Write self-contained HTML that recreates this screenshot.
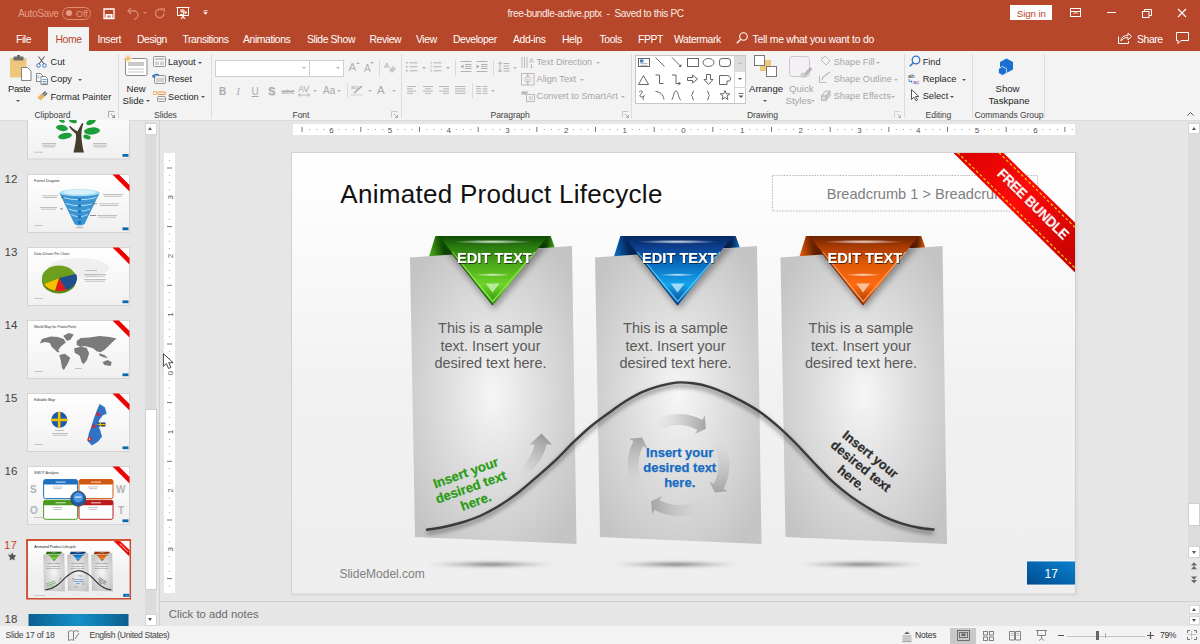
<!DOCTYPE html>
<html><head><meta charset="utf-8">
<style>
*{box-sizing:border-box;margin:0;padding:0}
html,body{width:1200px;height:644px;overflow:hidden;background:#e6e6e6;font-family:"Liberation Sans",sans-serif;position:relative}
.a{position:absolute}
.t{position:absolute;white-space:nowrap;line-height:1}
svg{position:absolute;overflow:visible}
#titlebar{left:0;top:0;width:1200px;height:51px;background:#b7472a}
#ribbon{left:0;top:51px;width:1200px;height:70px;background:#f3f3f3;border-bottom:1px solid #dadada}
.tab{position:absolute;top:34px;font-size:10.4px;color:#fff;letter-spacing:-0.4px}
.tb{position:absolute;top:8px;font-size:10.4px;color:#fff}
.rt{position:absolute;font-size:9.2px;color:#262626;white-space:nowrap;line-height:1}
.dis{color:#a6a6a6}
.gl{position:absolute;top:110.8px;font-size:8.6px;letter-spacing:-0.1px;color:#444;white-space:nowrap;line-height:1}
.sep{position:absolute;top:54px;width:1px;height:64px;background:#dcdcdc}
.dd{position:absolute;width:0;height:0;border-left:2.5px solid transparent;border-right:2.5px solid transparent;border-top:2.5px solid #555}
.dd.g{border-top-color:#b4b4b4}
.thumb{position:absolute;left:27.5px;width:102px;height:58px;background:#fff;border:1px solid #cfcfcf;overflow:hidden}
.tn{position:absolute;left:4px;font-size:12.5px;color:#444;line-height:1}
.rn{position:absolute;font-size:8px;color:#555;line-height:1}
</style></head><body>
<!-- TITLE BAR -->
<div id="titlebar" class="a"></div>
<div class="tb" style="left:18px;color:#e59b85;font-size:10.2px;top:8px;letter-spacing:-0.45px">AutoSave</div>
<div class="a" style="left:61.5px;top:6.5px;width:29.5px;height:13px;border:1px solid #e08d74;border-radius:7px"></div>
<div class="a" style="left:66px;top:10px;width:6px;height:6px;border-radius:3px;background:#e59b85"></div>
<div class="tb" style="left:76px;top:9px;font-size:9px;color:#e59b85">Off</div>
<!-- save -->
<svg style="left:103px;top:8px" width="12" height="11" viewBox="0 0 12 11"><path d="M1 1h10v9.5H1z" fill="none" stroke="#fff" stroke-width="1.3"/><rect x="2.5" y="6" width="7" height="4.5" fill="#fff"/><rect x="4.5" y="7.5" width="1.2" height="2" fill="#b7472a"/><rect x="6.3" y="7.5" width="1.2" height="2" fill="#b7472a"/></svg>
<!-- undo -->
<svg style="left:126px;top:7px" width="14" height="12" viewBox="0 0 14 12"><path d="M2 4h6a4 4 0 0 1 0 8" fill="none" stroke="#dd8a72" stroke-width="1.3"/><path d="M5 1L2 4l3 3" fill="none" stroke="#dd8a72" stroke-width="1.3"/></svg>
<div class="dd" style="left:143px;top:12px;border-top-color:#dd8a72"></div>
<svg style="left:154px;top:8px" width="12" height="11" viewBox="0 0 12 11"><path d="M8.5 2.2A4.3 4.3 0 1 0 10 5.5" fill="none" stroke="#dd8a72" stroke-width="1.3"/><path d="M6.5 0.8h3.8v3.5" fill="none" stroke="#dd8a72" stroke-width="1.2"/></svg>
<!-- slideshow from start icon -->
<svg style="left:176px;top:6px" width="15" height="14" viewBox="0 0 15 14"><path d="M0.5 1.5h13M1.5 1.5v8h11v-8M7 9.5v3M5 13l2-3 2 3" fill="none" stroke="#fff" stroke-width="1"/><path d="M4 4h4v1H5v1h2.5v2.5H4" fill="none" stroke="#fff" stroke-width="0.9"/><path d="M8.5 4.5l3 2-3 2z" fill="#fff"/></svg>
<svg style="left:203px;top:10px" width="5" height="5" viewBox="0 0 5 5"><path d="M0.5 0.8h4" stroke="#fff" stroke-width="0.9"/><path d="M0.3 2.3h4.4L2.5 4.8z" fill="#fff"/></svg>
<div class="tb" style="left:507.5px;top:8.3px;font-size:10px;color:#fcebe6;letter-spacing:-0.33px">free-bundle-active.pptx&nbsp; -&nbsp; Saved to this PC</div>
<div class="a" style="left:1009.5px;top:5px;width:42px;height:15px;background:#fff"></div>
<div class="tb" style="left:1016.8px;top:8px;font-size:9.8px;color:#b7472a;letter-spacing:-0.15px">Sign in</div>
<svg style="left:1070px;top:8px" width="11" height="9" viewBox="0 0 11 9"><rect x="0.5" y="0.5" width="10" height="8" fill="none" stroke="#fff" stroke-width="1"/><path d="M0.5 3.5h10" stroke="#fff"/><path d="M3.5 6l2-2 2 2" fill="none" stroke="#fff" stroke-width="1"/></svg>
<div class="a" style="left:1106.5px;top:12px;width:9px;height:1px;background:#fff"></div>
<svg style="left:1142px;top:8.5px" width="10" height="9" viewBox="0 0 10 9"><rect x="0.5" y="2.5" width="6.5" height="6" fill="none" stroke="#fff" stroke-width="1"/><path d="M2.5 2.5V0.5h7v6H7" fill="none" stroke="#fff" stroke-width="1"/></svg>
<svg style="left:1178px;top:8.5px" width="8" height="8" viewBox="0 0 8 8"><path d="M0 0L8 8M8 0L0 8" stroke="#fff" stroke-width="1.1"/></svg>
<!-- TABS -->
<div class="a" style="left:48px;top:27px;width:41px;height:25px;background:#f3f3f3"></div>
<div class="tab" style="left:16px">File</div>
<div class="tab" style="left:55.5px;color:#b7472a">Home</div>
<div class="tab" style="left:97.5px">Insert</div>
<div class="tab" style="left:137px">Design</div>
<div class="tab" style="left:182.5px">Transitions</div>
<div class="tab" style="left:243px">Animations</div>
<div class="tab" style="left:307px">Slide Show</div>
<div class="tab" style="left:369.5px">Review</div>
<div class="tab" style="left:416px">View</div>
<div class="tab" style="left:453px">Developer</div>
<div class="tab" style="left:513px">Add-ins</div>
<div class="tab" style="left:562px">Help</div>
<div class="tab" style="left:599.5px">Tools</div>
<div class="tab" style="left:638px">FPPT</div>
<div class="tab" style="left:674px">Watermark</div>
<svg style="left:736px;top:32px" width="12" height="12" viewBox="0 0 12 12"><circle cx="7.5" cy="4.5" r="3.8" fill="none" stroke="#fff" stroke-width="1.1"/><path d="M4.8 7.2L0.8 11.2" stroke="#fff" stroke-width="1.3"/></svg>
<div class="tab" style="left:752.5px;letter-spacing:-0.25px">Tell me what you want to do</div>
<svg style="left:1118px;top:32px" width="14" height="12" viewBox="0 0 14 12"><path d="M0.5 4.5v7h10V9" fill="none" stroke="#fff" stroke-width="1"/><path d="M3 9c0-4 3-5.5 7-5.5V1l3.5 3.5L10 8V5.5C7 5.5 4.5 6.5 3 9z" fill="none" stroke="#fff" stroke-width="1"/></svg>
<div class="tab" style="left:1137px">Share</div>
<svg style="left:1176px;top:32px" width="13" height="12" viewBox="0 0 13 12"><path d="M0.5 0.5h12v8H5l-3 3v-3H0.5z" fill="none" stroke="#fff" stroke-width="1"/></svg>
<!-- RIBBON -->
<div id="ribbon" class="a"></div>
<!-- Clipboard -->
<svg style="left:9px;top:55px" width="23" height="26" viewBox="0 0 23 26"><rect x="1" y="3" width="16.5" height="19.5" rx="1" fill="#edc77b"/><rect x="4.5" y="1.5" width="10" height="4" rx="0.8" fill="#6d6d6d"/><rect x="8" y="0" width="3" height="2" fill="#6d6d6d"/><path d="M12.5 12.5h6l3.5 3.5v9.5h-9.5z" fill="#fff" stroke="#777" stroke-width="0.9"/></svg>
<div class="rt" style="left:8px;top:83.5px;font-size:9.4px;letter-spacing:-0.3px">Paste</div>
<div class="dd" style="left:16px;top:99.5px"></div>
<svg style="left:36px;top:56px" width="11" height="12" viewBox="0 0 11 12"><path d="M2.5 0.5L8 8M8.5 0.5L3 8" stroke="#444" stroke-width="1"/><circle cx="2.5" cy="9.5" r="1.8" fill="none" stroke="#3d7ec4" stroke-width="1"/><circle cx="8.5" cy="9.5" r="1.8" fill="none" stroke="#3d7ec4" stroke-width="1"/></svg>
<div class="rt" style="left:50.5px;top:58px">Cut</div>
<svg style="left:36px;top:73px" width="12" height="12" viewBox="0 0 12 12"><path d="M0.5 0.5h4l2 2v6h-6z" fill="#fff" stroke="#777" stroke-width="0.9"/><path d="M5 3.5h4.5l2 2v6H5z" fill="#fff" stroke="#777" stroke-width="0.9"/><path d="M6.5 6.5h4M6.5 8.5h4M6.5 10.3h4" stroke="#3d7ec4" stroke-width="0.8"/><path d="M1.5 3h2M1.5 5h2" stroke="#3d7ec4" stroke-width="0.7"/></svg>
<div class="rt" style="left:50.5px;top:75px">Copy</div>
<div class="dd" style="left:78px;top:78.5px"></div>
<svg style="left:37px;top:91px" width="11" height="10" viewBox="0 0 11 10"><path d="M0.5 6.5l4-4 3 3-4 4z" fill="#e8b55e"/><path d="M5.5 3.5l3-3M7 5l3-3" stroke="#555" stroke-width="1.4"/></svg>
<div class="rt" style="left:50.5px;top:92.5px">Format Painter</div>
<div class="gl" style="left:34.5px">Clipboard</div>
<svg style="left:108px;top:111px" width="7" height="7" viewBox="0 0 7 7"><path d="M0.5 6.5v-6h6" fill="none" stroke="#999" stroke-width="0.8"/><path d="M3 3l3.5 3.5M6.5 4v2.5H4" fill="none" stroke="#777" stroke-width="0.8"/></svg>
<div class="sep" style="left:117.5px"></div>
<!-- Slides -->
<svg style="left:123px;top:54px" width="25" height="23" viewBox="0 0 25 23"><rect x="2.5" y="4.5" width="21.5" height="17" rx="1.5" fill="#fff" stroke="#8a8a8a" stroke-width="1"/><rect x="5" y="8" width="16" height="4" fill="#c8c8c8"/><path d="M5 15h16M5 18h16" stroke="#b8b8b8" stroke-width="0.8"/><circle cx="5" cy="4.5" r="2" fill="#f3c36d"/><path d="M5 0v9M0.5 4.5h9M1.8 1.3l6.4 6.4M8.2 1.3L1.8 7.7" stroke="#f3c36d" stroke-width="0.8"/></svg>
<div class="rt" style="left:126.5px;top:83.5px;font-size:9.6px">New</div>
<div class="rt" style="left:122.5px;top:95.5px;font-size:9.6px">Slide</div>
<div class="dd" style="left:146px;top:99.5px"></div>
<svg style="left:153px;top:56px" width="13" height="11" viewBox="0 0 13 11"><rect x="0.5" y="0.5" width="12" height="10" rx="1" fill="#f6f6f6" stroke="#8a8a8a" stroke-width="0.9"/><rect x="2" y="2" width="9" height="2" fill="#c8c8c8"/><rect x="2" y="5.5" width="4" height="3.5" fill="#d0d0d0"/><rect x="7" y="5.5" width="4" height="3.5" fill="#d0d0d0"/></svg>
<div class="rt" style="left:168px;top:58px">Layout</div>
<div class="dd" style="left:197.5px;top:62px"></div>
<svg style="left:152px;top:73px" width="14" height="11" viewBox="0 0 14 11"><rect x="2.5" y="2.5" width="11" height="8" rx="1" fill="#eee" stroke="#8a8a8a" stroke-width="0.9"/><rect x="4" y="5" width="8" height="4" fill="#d0d0d0"/><path d="M1 4A3.5 3.5 0 0 1 7 2.5" fill="none" stroke="#2f73c2" stroke-width="1.3"/><path d="M0 2l1 3 3-1z" fill="#2f73c2"/></svg>
<div class="rt" style="left:168px;top:75px">Reset</div>
<svg style="left:153px;top:91px" width="13" height="11" viewBox="0 0 13 11"><rect x="0.5" y="0.5" width="3" height="3" fill="none" stroke="#f0b060" stroke-width="0.8"/><rect x="4.5" y="1" width="8" height="2.5" rx="1" fill="#f4f4f4" stroke="#e8833a" stroke-width="0.9"/><rect x="4.5" y="5.5" width="8" height="5" rx="1" fill="#f4f4f4" stroke="#8a8a8a" stroke-width="0.9"/><path d="M4.5 8h8" stroke="#8a8a8a" stroke-width="0.8"/></svg>
<div class="rt" style="left:168px;top:92.5px">Section</div>
<div class="dd" style="left:201px;top:96px"></div>
<div class="gl" style="left:154px">Slides</div>
<div class="sep" style="left:211px"></div>
<!-- Font -->
<div class="a" style="left:214.5px;top:59.5px;width:95px;height:17px;background:#fff;border:1px solid #cfcfcf"></div>
<div class="a" style="left:308.5px;top:59.5px;width:35px;height:17px;background:#fff;border:1px solid #cfcfcf"></div>
<div class="dd g" style="left:302px;top:67px"></div>
<div class="dd g" style="left:336px;top:67px"></div>
<div class="rt dis" style="left:348.5px;top:62px;font-size:11.5px;color:#b0b0b0">A</div>
<div class="a" style="left:356px;top:62px;width:0;height:0;border-left:2px solid transparent;border-right:2px solid transparent;border-bottom:2px solid #b0b0b0"></div>
<div class="rt dis" style="left:364px;top:64px;font-size:10px;color:#b0b0b0">A</div>
<div class="a" style="left:370px;top:62px;width:0;height:0;border-left:2px solid transparent;border-right:2px solid transparent;border-top:2px solid #b0b0b0"></div>
<div class="a" style="left:378.5px;top:60px;width:1px;height:17px;background:#dadada"></div>
<svg style="left:384px;top:61px" width="13" height="13" viewBox="0 0 13 13"><text x="0" y="7" font-size="8" fill="#b0b0b0" font-family="Liberation Sans">A</text><path d="M5 9l4-4 3 3-4 4z" fill="#c8c8c8"/></svg>
<div class="rt" style="left:219px;top:86.5px;font-size:10px;font-weight:bold;color:#aaa">B</div>
<div class="rt" style="left:236.5px;top:86.5px;font-size:10px;font-style:italic;color:#aaa;font-family:'Liberation Serif'">I</div>
<div class="rt" style="left:251.5px;top:86.5px;font-size:10px;color:#aaa;text-decoration:underline">U</div>
<div class="rt" style="left:268px;top:85.5px;font-size:11px;font-weight:bold;color:#aaa;text-shadow:1px 1px 0 #ddd">S</div>
<div class="rt" style="left:281.5px;top:88px;font-size:8px;color:#aaa;text-decoration:line-through">abc</div>
<div class="rt" style="left:298px;top:84.5px;font-size:9px;color:#aaa">AV</div>
<svg style="left:298px;top:93px" width="12" height="4" viewBox="0 0 12 4"><path d="M0.5 2h11M2.5 0.5L0.5 2l2 1.5M9.5 0.5l2 1.5-2 1.5" fill="none" stroke="#aaa" stroke-width="0.8"/></svg>
<div class="dd g" style="left:313px;top:90px"></div>
<div class="rt" style="left:323px;top:86px;font-size:10px;color:#aaa">Aa</div>
<div class="dd g" style="left:336.5px;top:90px"></div>
<div class="a" style="left:346.5px;top:83px;width:1px;height:15px;background:#dadada"></div>
<svg style="left:351px;top:84px" width="13" height="12" viewBox="0 0 13 12"><text x="0" y="5" font-size="6" fill="#aaa" font-family="Liberation Sans">aty</text><path d="M3 9l8-7" stroke="#aaa" stroke-width="1.6"/><rect x="0" y="10" width="12" height="1.6" fill="#e6d9e6"/></svg>
<div class="dd g" style="left:367.5px;top:90px"></div>
<div class="rt" style="left:377px;top:84.5px;font-size:11.5px;color:#aaa">A</div>
<div class="dd g" style="left:391.5px;top:90px"></div>
<div class="gl" style="left:292.5px">Font</div>
<svg style="left:391px;top:111px" width="7" height="7" viewBox="0 0 7 7"><path d="M0.5 6.5v-6h6" fill="none" stroke="#bbb" stroke-width="0.8"/><path d="M3 3l3.5 3.5M6.5 4v2.5H4" fill="none" stroke="#999" stroke-width="0.8"/></svg>
<div class="sep" style="left:400.5px"></div>
<!-- Paragraph -->
<svg style="left:406px;top:61px" width="12" height="12" viewBox="0 0 12 12"><g fill="#aaa"><rect x="0" y="1" width="1.5" height="1.5"/><rect x="0" y="5" width="1.5" height="1.5"/><rect x="0" y="9" width="1.5" height="1.5"/></g><path d="M3.5 1.8h8M3.5 5.8h8M3.5 9.8h8" stroke="#aaa" stroke-width="0.9"/></svg>
<div class="dd g" style="left:421.5px;top:67px"></div>
<svg style="left:430px;top:61px" width="12" height="12" viewBox="0 0 12 12"><g fill="#aaa" font-size="3.5" font-family="Liberation Sans"><text x="0" y="3">1</text><text x="0" y="7">2</text><text x="0" y="11">3</text></g><path d="M3.5 1.8h8M3.5 5.8h8M3.5 9.8h8" stroke="#aaa" stroke-width="0.9"/></svg>
<div class="dd g" style="left:445.5px;top:67px"></div>
<div class="a" style="left:455px;top:60px;width:1px;height:16px;background:#dadada"></div>
<svg style="left:460px;top:61px" width="12" height="11" viewBox="0 0 12 11"><path d="M0.5 0.5h11M5 3.5h6.5M5 5.5h6.5M5 7.5h6.5M0.5 10.5h11" stroke="#aaa" stroke-width="0.9"/><path d="M3.5 3.5L0.5 5.5l3 2z" fill="#aaa"/></svg>
<svg style="left:476px;top:61px" width="12" height="11" viewBox="0 0 12 11"><path d="M0.5 0.5h11M5 3.5h6.5M5 5.5h6.5M5 7.5h6.5M0.5 10.5h11" stroke="#aaa" stroke-width="0.9"/><path d="M0.5 3.5L3.5 5.5l-3 2z" fill="#aaa"/></svg>
<div class="a" style="left:493px;top:60px;width:1px;height:16px;background:#dadada"></div>
<svg style="left:498px;top:61px" width="12" height="12" viewBox="0 0 12 12"><path d="M2 1v10M0 3l2-2.2L4 3M0 9l2 2.2L4 9" fill="none" stroke="#aaa" stroke-width="0.9"/><path d="M5.5 2.5h6M5.5 5h6M5.5 7.5h6M5.5 10h6" stroke="#aaa" stroke-width="0.9"/></svg>
<div class="dd g" style="left:513px;top:67px"></div>
<svg style="left:521px;top:56px" width="14" height="13" viewBox="0 0 14 13"><path d="M1 1v11M3.5 1v11M6 1v11" stroke="#b4b4b4" stroke-width="0.9"/><text x="8" y="7" font-size="7" fill="#b4b4b4" font-family="Liberation Sans">A</text><path d="M10.5 8v4M9.3 10.8l1.2 1.2 1.2-1.2" fill="none" stroke="#b4b4b4" stroke-width="0.8"/></svg>
<div class="rt dis" style="left:536.5px;top:57.5px">Text Direction</div>
<div class="dd g" style="left:596px;top:61.5px"></div>
<svg style="left:521px;top:73px" width="14" height="13" viewBox="0 0 14 13"><rect x="0.5" y="0.5" width="12.5" height="11.5" fill="none" stroke="#b4b4b4" stroke-width="0.9"/><rect x="3" y="3.5" width="7.5" height="5.5" fill="#e6d9e6"/><path d="M6.8 0v4M5.5 2.5l1.3 1.5 1.3-1.5M6.8 12.5v-4M5.5 10l1.3-1.5 1.3 1.5" fill="none" stroke="#aaa" stroke-width="0.8"/></svg>
<div class="rt dis" style="left:536.5px;top:74.5px">Align Text</div>
<div class="dd g" style="left:580px;top:78.5px"></div>
<svg style="left:521px;top:91px" width="14" height="11" viewBox="0 0 14 11"><path d="M0.5 0.5h7l-2.5 3h-4.5z" fill="#b4b4b4"/><rect x="5.5" y="3.5" width="8" height="7" fill="#f3f3f3" stroke="#b4b4b4" stroke-width="0.9"/><path d="M7.5 6h4.5M7.5 8h4.5" stroke="#b4b4b4" stroke-width="0.8"/></svg>
<div class="rt dis" style="left:536.5px;top:92px">Convert to SmartArt</div>
<div class="dd g" style="left:621px;top:96px"></div>
<svg style="left:407px;top:86px" width="10" height="9" viewBox="0 0 10 9"><path d="M0 0.5h9M0 2.8h6M0 5.1h9M0 7.4h6" stroke="#b0b0b0" stroke-width="0.9"/></svg>
<svg style="left:423px;top:86px" width="10" height="9" viewBox="0 0 10 9"><path d="M0 0.5h10M2 2.8h6M0 5.1h10M2 7.4h6" stroke="#b0b0b0" stroke-width="0.9"/></svg>
<svg style="left:439px;top:86px" width="10" height="9" viewBox="0 0 10 9"><path d="M0 0.5h10M4 2.8h6M0 5.1h10M4 7.4h6" stroke="#b0b0b0" stroke-width="0.9"/></svg>
<svg style="left:455px;top:86px" width="11" height="9" viewBox="0 0 11 9"><path d="M0 0.5h10.5M0 2.8h10.5M0 5.1h10.5M0 7.4h10.5" stroke="#b0b0b0" stroke-width="0.9"/></svg>
<div class="a" style="left:471.5px;top:83px;width:1px;height:15px;background:#dadada"></div>
<svg style="left:476px;top:86px" width="12" height="9" viewBox="0 0 12 9"><path d="M0 0.5h5M0 2.8h5M0 5.1h5M0 7.4h5M6.5 0.5h5M6.5 2.8h5M6.5 5.1h5M6.5 7.4h5" stroke="#b0b0b0" stroke-width="0.9"/></svg>
<div class="dd g" style="left:490.5px;top:90px"></div>
<div class="gl" style="left:490.5px">Paragraph</div>
<svg style="left:622px;top:111px" width="7" height="7" viewBox="0 0 7 7"><path d="M0.5 6.5v-6h6" fill="none" stroke="#bbb" stroke-width="0.8"/><path d="M3 3l3.5 3.5M6.5 4v2.5H4" fill="none" stroke="#999" stroke-width="0.8"/></svg>
<div class="sep" style="left:631px"></div>
<!-- Drawing -->
<div class="a" style="left:635px;top:54.5px;width:111px;height:49px;background:#fff;border:1px solid #c6c6c6"></div>
<div class="a" style="left:734.5px;top:55.5px;width:10.5px;height:16px;background:#dcdcdc"></div>
<div class="a" style="left:734px;top:55px;width:1px;height:48px;background:#d6d6d6"></div>
<div class="a" style="left:734.5px;top:86.5px;width:11px;height:1px;background:#d6d6d6"></div>
<div class="a" style="left:738px;top:62px;width:0;height:0;border-left:2px solid transparent;border-right:2px solid transparent;border-bottom:2px solid #bbb"></div>
<div class="dd" style="left:737.5px;top:78px"></div>
<svg style="left:737.5px;top:93px" width="6" height="6" viewBox="0 0 6 6"><path d="M0.5 0.5h5" stroke="#555" stroke-width="0.8"/><path d="M0.5 2.5h5L3 5z" fill="#555"/></svg>
<svg style="left:636px;top:55px" width="98" height="48" viewBox="636 55 98 48">
<g fill="none" stroke="#555" stroke-width="0.9">
<rect x="638.5" y="58.5" width="11" height="8" fill="#fff"/><path d="M640.5 63.5h7M640.5 65.3h7" stroke="#999" stroke-width="0.7"/>
<path d="M655.5 57.5l9 9"/>
<path d="M672 57.5l8.5 8.5"/><path d="M679 66.5h2v-2" stroke-width="1"/>
<rect x="687.5" y="58.5" width="11" height="8"/>
<ellipse cx="708.5" cy="62.5" rx="5.5" ry="4"/>
<rect x="719.5" y="58.5" width="11" height="8" rx="2.5"/>
<path d="M638.5 84.5l5-9 5 9z"/>
<path d="M655.5 75h4v8.5h4"/>
<path d="M672 75h4v8.5h4"/><path d="M678.5 82l2 1.5-2 1.5"/>
<path d="M687.5 77.5h5v-2.5l5 4-5 4v-2.5h-5z"/>
<path d="M706.5 74.5h4v5h2.5l-4.5 5-4.5-5h2.5z"/>
<path d="M719.5 84.5v-9h7c2 0 4 1 4 3.5 0 2-1 2-2.5 2h-1v3.5z"/>
<path d="M639 92c2-2 5-1 2 2s1 4 3 2-3 3 0 4"/>
<path d="M655.5 91.5c4 0 8 3 8.5 8"/>
<path d="M671.5 100c2-1 2-9 4.5-9s2.5 9 5 9"/>
<path d="M694 91c-2 0-1 4-2.5 4.5 1.5.5.5 4.5 2.5 4.5"/>
<path d="M707 91c2 0 1 4 2.5 4.5-1.5.5-.5 4.5-2.5 4.5"/>
<path d="M725 90.5l1.3 3.3h3.5l-2.8 2.2 1 3.5-3-2-3 2 1-3.5-2.8-2.2h3.5z"/>
</g>
<path d="M640 59.5h3.5v3h-3.5z" fill="#3d7ec4"/>
</svg>
<svg style="left:754px;top:55px" width="24" height="23" viewBox="0 0 24 23"><rect x="6" y="5" width="11" height="11" fill="#edc77b"/><rect x="0.5" y="0.5" width="10" height="10" fill="#fff" stroke="#6a6a6a" stroke-width="0.9"/><rect x="12.5" y="11.5" width="10" height="10" fill="#fff" stroke="#6a6a6a" stroke-width="0.9"/></svg>
<div class="rt" style="left:749px;top:83.5px;font-size:9.6px">Arrange</div>
<div class="dd" style="left:763px;top:99.5px"></div>
<svg style="left:789px;top:56px" width="24" height="24" viewBox="0 0 24 24"><rect x="0.5" y="0.5" width="20" height="20" rx="3" fill="#f5f0f5" stroke="#c8c8c8" stroke-width="1"/><path d="M13 20l8-9 2.5 2-8 9z" fill="#b4b4b4"/><circle cx="14" cy="19" r="2.5" fill="#ccc"/></svg>
<div class="rt dis" style="left:789px;top:83.5px;font-size:9.6px">Quick</div>
<div class="rt dis" style="left:785.5px;top:95.5px;font-size:9.6px">Styles</div>
<div class="dd g" style="left:811px;top:99.5px"></div>
<div class="gl" style="left:747px">Drawing</div>
<svg style="left:820px;top:55px" width="12" height="11" viewBox="0 0 12 11"><path d="M1 5l4-4 5 5-4 4z" fill="none" stroke="#b4b4b4" stroke-width="0.9"/><path d="M2.5 3.5L1 2" stroke="#b4b4b4"/></svg>
<div class="rt dis" style="left:833.7px;top:57.5px">Shape Fill</div>
<div class="dd g" style="left:876px;top:61.5px"></div>
<svg style="left:819px;top:72px" width="12" height="11" viewBox="0 0 12 11"><path d="M0.5 3.5v7h7" fill="none" stroke="#b4b4b4" stroke-width="0.9"/><path d="M3 8l1-3 7-5" fill="none" stroke="#b4b4b4" stroke-width="1.1"/></svg>
<div class="rt dis" style="left:833.7px;top:74.5px">Shape Outline</div>
<div class="dd g" style="left:893.5px;top:78.5px"></div>
<svg style="left:819.5px;top:89.5px" width="11" height="11" viewBox="0 0 11 11"><path d="M1.5 6l4-5h4.5l-4 5z" fill="#eee" stroke="#b4b4b4" stroke-width="0.9"/><path d="M1.5 6h4.5v4.5H1.5z" fill="#ddd" stroke="#b4b4b4" stroke-width="0.9"/><path d="M6 6l4-5v4.5l-4 5z" fill="#ccc" stroke="#b4b4b4" stroke-width="0.9"/></svg>
<div class="rt dis" style="left:833.7px;top:91.5px">Shape Effects</div>
<div class="dd g" style="left:891px;top:95.5px"></div>
<svg style="left:894px;top:111px" width="7" height="7" viewBox="0 0 7 7"><path d="M0.5 6.5v-6h6" fill="none" stroke="#ccc" stroke-width="0.8"/><path d="M3 3l3.5 3.5M6.5 4v2.5H4" fill="none" stroke="#aaa" stroke-width="0.8"/></svg>
<div class="sep" style="left:903.5px"></div>
<!-- Editing -->
<svg style="left:909px;top:55px" width="12" height="12" viewBox="0 0 12 12"><circle cx="7" cy="5" r="3.8" fill="none" stroke="#2f73c2" stroke-width="1.3"/><path d="M4.3 7.7L0.8 11.2" stroke="#2f73c2" stroke-width="1.6"/></svg>
<div class="rt" style="left:922.7px;top:57.5px">Find</div>
<svg style="left:908px;top:72px" width="13" height="13" viewBox="0 0 13 13"><text x="0" y="5.5" font-size="6" fill="#333" font-family="Liberation Sans">ab</text><text x="5" y="11.5" font-size="6" fill="#7b4fb5" font-family="Liberation Sans">ac</text><path d="M1 7v2.5h3M3 8.5l1.2 1-1.2 1" fill="none" stroke="#2f73c2" stroke-width="0.8"/></svg>
<div class="rt" style="left:922.7px;top:74.5px">Replace</div>
<div class="dd" style="left:962px;top:78.5px"></div>
<svg style="left:911px;top:89px" width="8" height="12" viewBox="0 0 8 12"><path d="M0.5 0.5v10l2.5-2.3 2 3.5 1.5-.8-2-3.4h3.3z" fill="#fff" stroke="#444" stroke-width="0.9"/></svg>
<div class="rt" style="left:922.7px;top:91.5px">Select</div>
<div class="dd" style="left:950px;top:95.5px"></div>
<div class="gl" style="left:925.6px">Editing</div>
<div class="sep" style="left:971.5px"></div>
<!-- Commands -->
<svg style="left:998px;top:58px" width="17" height="17" viewBox="0 0 17 17"><path d="M8.5 0.5l6.5 3.5v7.5l-6.5 3.5-6.5-3.5V4z" fill="#1a6fd1"/><path d="M4.5 8.5l4 2.2v4.5l-4 2.2-4-2.2v-4.5z" fill="#1a6fd1" stroke="#f3f3f3" stroke-width="0.8"/></svg>
<div class="rt" style="left:995.5px;top:84px;font-size:9.6px">Show</div>
<div class="rt" style="left:988.5px;top:96px;font-size:9.6px">Taskpane</div>
<div class="gl" style="left:974.5px">Commands Group</div>
<div class="sep" style="left:1043.5px"></div>
<svg style="left:1187px;top:112px" width="7" height="4" viewBox="0 0 7 4"><path d="M0.5 3.5l3-3 3 3" fill="none" stroke="#444" stroke-width="0.9"/></svg>

<!-- PANE -->
<div class="a" style="left:145px;top:122px;width:11px;height:503px;background:#dcdcdc"></div>
<div class="a" style="left:144.5px;top:122.5px;width:12px;height:12px;background:#fff;border:1px solid #d4d4d4"></div>
<div class="a" style="left:148px;top:127px;width:0;height:0;border-left:2.5px solid transparent;border-right:2.5px solid transparent;border-bottom:3px solid #555"></div>
<div class="a" style="left:144.5px;top:408.5px;width:12px;height:181px;background:#fff;border:1px solid #cfcfcf"></div>
<div class="a" style="left:144.5px;top:613.5px;width:12px;height:12px;background:#fff;border:1px solid #d4d4d4"></div>
<div class="a" style="left:148px;top:618px;width:0;height:0;border-left:2.5px solid transparent;border-right:2.5px solid transparent;border-top:3px solid #555"></div>
<div class="a" style="left:159px;top:120px;width:1px;height:506px;background:#d2d2d2"></div>
<div class="a" style="left:164px;top:153px;width:11px;height:440px;background:#fff"></div>
<div class="a" style="left:293px;top:124px;width:782px;height:11px;background:#fff"></div>
<svg style="left:0;top:0" width="1200" height="644" viewBox="0 0 1200 644"><rect x="301.6" y="127" width="1" height="5" fill="#777"/><rect x="309.0" y="129" width="1" height="1" fill="#999"/><rect x="316.3" y="129" width="1" height="1" fill="#999"/><rect x="323.6" y="129" width="1" height="1" fill="#999"/><text x="331.5" y="132.8" font-size="8" fill="#555" text-anchor="middle" font-family="Liberation Sans">6</text><rect x="338.3" y="129" width="1" height="1" fill="#999"/><rect x="345.6" y="129" width="1" height="1" fill="#999"/><rect x="353.0" y="129" width="1" height="1" fill="#999"/><rect x="360.3" y="127" width="1" height="5" fill="#777"/><rect x="367.6" y="129" width="1" height="1" fill="#999"/><rect x="375.0" y="129" width="1" height="1" fill="#999"/><rect x="382.3" y="129" width="1" height="1" fill="#999"/><text x="390.1" y="132.8" font-size="8" fill="#555" text-anchor="middle" font-family="Liberation Sans">5</text><rect x="397.0" y="129" width="1" height="1" fill="#999"/><rect x="404.3" y="129" width="1" height="1" fill="#999"/><rect x="411.7" y="129" width="1" height="1" fill="#999"/><rect x="419.0" y="127" width="1" height="5" fill="#777"/><rect x="426.3" y="129" width="1" height="1" fill="#999"/><rect x="433.7" y="129" width="1" height="1" fill="#999"/><rect x="441.0" y="129" width="1" height="1" fill="#999"/><text x="448.8" y="132.8" font-size="8" fill="#555" text-anchor="middle" font-family="Liberation Sans">4</text><rect x="455.7" y="129" width="1" height="1" fill="#999"/><rect x="463.0" y="129" width="1" height="1" fill="#999"/><rect x="470.3" y="129" width="1" height="1" fill="#999"/><rect x="477.7" y="127" width="1" height="5" fill="#777"/><rect x="485.0" y="129" width="1" height="1" fill="#999"/><rect x="492.3" y="129" width="1" height="1" fill="#999"/><rect x="499.7" y="129" width="1" height="1" fill="#999"/><text x="507.5" y="132.8" font-size="8" fill="#555" text-anchor="middle" font-family="Liberation Sans">3</text><rect x="514.3" y="129" width="1" height="1" fill="#999"/><rect x="521.7" y="129" width="1" height="1" fill="#999"/><rect x="529.0" y="129" width="1" height="1" fill="#999"/><rect x="536.3" y="127" width="1" height="5" fill="#777"/><rect x="543.7" y="129" width="1" height="1" fill="#999"/><rect x="551.0" y="129" width="1" height="1" fill="#999"/><rect x="558.3" y="129" width="1" height="1" fill="#999"/><text x="566.2" y="132.8" font-size="8" fill="#555" text-anchor="middle" font-family="Liberation Sans">2</text><rect x="573.0" y="129" width="1" height="1" fill="#999"/><rect x="580.3" y="129" width="1" height="1" fill="#999"/><rect x="587.7" y="129" width="1" height="1" fill="#999"/><rect x="595.0" y="127" width="1" height="5" fill="#777"/><rect x="602.3" y="129" width="1" height="1" fill="#999"/><rect x="609.7" y="129" width="1" height="1" fill="#999"/><rect x="617.0" y="129" width="1" height="1" fill="#999"/><text x="624.8" y="132.8" font-size="8" fill="#555" text-anchor="middle" font-family="Liberation Sans">1</text><rect x="631.7" y="129" width="1" height="1" fill="#999"/><rect x="639.0" y="129" width="1" height="1" fill="#999"/><rect x="646.3" y="129" width="1" height="1" fill="#999"/><rect x="653.7" y="127" width="1" height="5" fill="#777"/><rect x="661.0" y="129" width="1" height="1" fill="#999"/><rect x="668.3" y="129" width="1" height="1" fill="#999"/><rect x="675.7" y="129" width="1" height="1" fill="#999"/><text x="683.5" y="132.8" font-size="8" fill="#555" text-anchor="middle" font-family="Liberation Sans">0</text><rect x="690.3" y="129" width="1" height="1" fill="#999"/><rect x="697.7" y="129" width="1" height="1" fill="#999"/><rect x="705.0" y="129" width="1" height="1" fill="#999"/><rect x="712.3" y="127" width="1" height="5" fill="#777"/><rect x="719.7" y="129" width="1" height="1" fill="#999"/><rect x="727.0" y="129" width="1" height="1" fill="#999"/><rect x="734.3" y="129" width="1" height="1" fill="#999"/><text x="742.2" y="132.8" font-size="8" fill="#555" text-anchor="middle" font-family="Liberation Sans">1</text><rect x="749.0" y="129" width="1" height="1" fill="#999"/><rect x="756.3" y="129" width="1" height="1" fill="#999"/><rect x="763.7" y="129" width="1" height="1" fill="#999"/><rect x="771.0" y="127" width="1" height="5" fill="#777"/><rect x="778.3" y="129" width="1" height="1" fill="#999"/><rect x="785.7" y="129" width="1" height="1" fill="#999"/><rect x="793.0" y="129" width="1" height="1" fill="#999"/><text x="800.8" y="132.8" font-size="8" fill="#555" text-anchor="middle" font-family="Liberation Sans">2</text><rect x="807.7" y="129" width="1" height="1" fill="#999"/><rect x="815.0" y="129" width="1" height="1" fill="#999"/><rect x="822.3" y="129" width="1" height="1" fill="#999"/><rect x="829.7" y="127" width="1" height="5" fill="#777"/><rect x="837.0" y="129" width="1" height="1" fill="#999"/><rect x="844.3" y="129" width="1" height="1" fill="#999"/><rect x="851.7" y="129" width="1" height="1" fill="#999"/><text x="859.5" y="132.8" font-size="8" fill="#555" text-anchor="middle" font-family="Liberation Sans">3</text><rect x="866.3" y="129" width="1" height="1" fill="#999"/><rect x="873.7" y="129" width="1" height="1" fill="#999"/><rect x="881.0" y="129" width="1" height="1" fill="#999"/><rect x="888.3" y="127" width="1" height="5" fill="#777"/><rect x="895.7" y="129" width="1" height="1" fill="#999"/><rect x="903.0" y="129" width="1" height="1" fill="#999"/><rect x="910.3" y="129" width="1" height="1" fill="#999"/><text x="918.2" y="132.8" font-size="8" fill="#555" text-anchor="middle" font-family="Liberation Sans">4</text><rect x="925.0" y="129" width="1" height="1" fill="#999"/><rect x="932.3" y="129" width="1" height="1" fill="#999"/><rect x="939.7" y="129" width="1" height="1" fill="#999"/><rect x="947.0" y="127" width="1" height="5" fill="#777"/><rect x="954.3" y="129" width="1" height="1" fill="#999"/><rect x="961.7" y="129" width="1" height="1" fill="#999"/><rect x="969.0" y="129" width="1" height="1" fill="#999"/><text x="976.9" y="132.8" font-size="8" fill="#555" text-anchor="middle" font-family="Liberation Sans">5</text><rect x="983.7" y="129" width="1" height="1" fill="#999"/><rect x="991.0" y="129" width="1" height="1" fill="#999"/><rect x="998.4" y="129" width="1" height="1" fill="#999"/><rect x="1005.7" y="127" width="1" height="5" fill="#777"/><rect x="1013.0" y="129" width="1" height="1" fill="#999"/><rect x="1020.4" y="129" width="1" height="1" fill="#999"/><rect x="1027.7" y="129" width="1" height="1" fill="#999"/><text x="1035.5" y="132.8" font-size="8" fill="#555" text-anchor="middle" font-family="Liberation Sans">6</text><rect x="1042.4" y="129" width="1" height="1" fill="#999"/><rect x="1049.7" y="129" width="1" height="1" fill="#999"/><rect x="1057.0" y="129" width="1" height="1" fill="#999"/><rect x="1064.4" y="127" width="1" height="5" fill="#777"/><rect x="1071.7" y="129" width="1" height="1" fill="#999"/><rect x="169" y="160.1" width="1" height="1" fill="#999"/><rect x="167" y="167.5" width="5" height="1" fill="#777"/><rect x="169" y="174.8" width="1" height="1" fill="#999"/><rect x="169" y="182.1" width="1" height="1" fill="#999"/><rect x="169" y="189.5" width="1" height="1" fill="#999"/><text x="0" y="0" font-size="8" fill="#555" text-anchor="middle" font-family="Liberation Sans" transform="translate(172.8,197.3) rotate(-90)">3</text><rect x="169" y="204.1" width="1" height="1" fill="#999"/><rect x="169" y="211.5" width="1" height="1" fill="#999"/><rect x="169" y="218.8" width="1" height="1" fill="#999"/><rect x="167" y="226.1" width="5" height="1" fill="#777"/><rect x="169" y="233.5" width="1" height="1" fill="#999"/><rect x="169" y="240.8" width="1" height="1" fill="#999"/><rect x="169" y="248.1" width="1" height="1" fill="#999"/><text x="0" y="0" font-size="8" fill="#555" text-anchor="middle" font-family="Liberation Sans" transform="translate(172.8,256.0) rotate(-90)">2</text><rect x="169" y="262.8" width="1" height="1" fill="#999"/><rect x="169" y="270.1" width="1" height="1" fill="#999"/><rect x="169" y="277.5" width="1" height="1" fill="#999"/><rect x="167" y="284.8" width="5" height="1" fill="#777"/><rect x="169" y="292.1" width="1" height="1" fill="#999"/><rect x="169" y="299.5" width="1" height="1" fill="#999"/><rect x="169" y="306.8" width="1" height="1" fill="#999"/><text x="0" y="0" font-size="8" fill="#555" text-anchor="middle" font-family="Liberation Sans" transform="translate(172.8,314.6) rotate(-90)">1</text><rect x="169" y="321.5" width="1" height="1" fill="#999"/><rect x="169" y="328.8" width="1" height="1" fill="#999"/><rect x="169" y="336.1" width="1" height="1" fill="#999"/><rect x="167" y="343.5" width="5" height="1" fill="#777"/><rect x="169" y="350.8" width="1" height="1" fill="#999"/><rect x="169" y="358.1" width="1" height="1" fill="#999"/><rect x="169" y="365.5" width="1" height="1" fill="#999"/><text x="0" y="0" font-size="8" fill="#555" text-anchor="middle" font-family="Liberation Sans" transform="translate(172.8,373.3) rotate(-90)">0</text><rect x="169" y="380.1" width="1" height="1" fill="#999"/><rect x="169" y="387.5" width="1" height="1" fill="#999"/><rect x="169" y="394.8" width="1" height="1" fill="#999"/><rect x="167" y="402.1" width="5" height="1" fill="#777"/><rect x="169" y="409.5" width="1" height="1" fill="#999"/><rect x="169" y="416.8" width="1" height="1" fill="#999"/><rect x="169" y="424.1" width="1" height="1" fill="#999"/><text x="0" y="0" font-size="8" fill="#555" text-anchor="middle" font-family="Liberation Sans" transform="translate(172.8,432.0) rotate(-90)">1</text><rect x="169" y="438.8" width="1" height="1" fill="#999"/><rect x="169" y="446.1" width="1" height="1" fill="#999"/><rect x="169" y="453.5" width="1" height="1" fill="#999"/><rect x="167" y="460.8" width="5" height="1" fill="#777"/><rect x="169" y="468.1" width="1" height="1" fill="#999"/><rect x="169" y="475.5" width="1" height="1" fill="#999"/><rect x="169" y="482.8" width="1" height="1" fill="#999"/><text x="0" y="0" font-size="8" fill="#555" text-anchor="middle" font-family="Liberation Sans" transform="translate(172.8,490.6) rotate(-90)">2</text><rect x="169" y="497.5" width="1" height="1" fill="#999"/><rect x="169" y="504.8" width="1" height="1" fill="#999"/><rect x="169" y="512.1" width="1" height="1" fill="#999"/><rect x="167" y="519.5" width="5" height="1" fill="#777"/><rect x="169" y="526.8" width="1" height="1" fill="#999"/><rect x="169" y="534.1" width="1" height="1" fill="#999"/><rect x="169" y="541.5" width="1" height="1" fill="#999"/><text x="0" y="0" font-size="8" fill="#555" text-anchor="middle" font-family="Liberation Sans" transform="translate(172.8,549.3) rotate(-90)">3</text><rect x="169" y="556.1" width="1" height="1" fill="#999"/><rect x="169" y="563.5" width="1" height="1" fill="#999"/><rect x="169" y="570.8" width="1" height="1" fill="#999"/><rect x="167" y="578.1" width="5" height="1" fill="#777"/><rect x="169" y="585.5" width="1" height="1" fill="#999"/></svg>
<div class="a" style="left:1188px;top:122px;width:12px;height:436px;background:#dcdcdc"></div>
<div class="a" style="left:1188px;top:122.5px;width:11.5px;height:11px;background:#fff;border:1px solid #d4d4d4"></div>
<div class="a" style="left:1191.5px;top:126.5px;width:0;height:0;border-left:2.5px solid transparent;border-right:2.5px solid transparent;border-bottom:3px solid #555"></div>
<div class="a" style="left:1188px;top:503px;width:11.5px;height:22.5px;background:#fff;border:1px solid #cfcfcf"></div>
<div class="a" style="left:1188px;top:546px;width:11.5px;height:12px;background:#fff;border:1px solid #d4d4d4"></div>
<div class="a" style="left:1191.5px;top:550.5px;width:0;height:0;border-left:2.5px solid transparent;border-right:2.5px solid transparent;border-top:3px solid #555"></div>
<svg style="left:1190px;top:561px" width="8" height="22" viewBox="0 0 8 22"><path d="M1 4.6L4 1.3 7 4.6z M1 8.3L4 5 7 8.3z" fill="#666"/><path d="M1 15.4L4 18.7 7 15.4z M1 18.9L4 22.2 7 18.9z" fill="#666"/></svg>
<div class="a" style="left:160px;top:601px;width:1040px;height:1px;background:#cfcfcf"></div>
<div class="t" style="left:168.8px;top:608.5px;font-size:11.3px;color:#6a6a6a">Click to add notes</div>
<div class="a" style="left:1188.5px;top:605px;width:11px;height:9px;background:#fff;border:1px solid #d8d8d8"></div>
<div class="a" style="left:1191.5px;top:608px;width:0;height:0;border-left:2.5px solid transparent;border-right:2.5px solid transparent;border-bottom:3px solid #555"></div>
<div class="a" style="left:1188.5px;top:616px;width:11px;height:9px;background:#fff;border:1px solid #d8d8d8"></div>
<div class="a" style="left:1191.5px;top:619px;width:0;height:0;border-left:2.5px solid transparent;border-right:2.5px solid transparent;border-top:3px solid #555"></div>
<div class="a" style="left:0;top:626px;width:1200px;height:18px;background:#f3f3f3"></div>
<div class="t" style="left:5.5px;top:631px;font-size:8.6px;color:#444;letter-spacing:-0.25px">Slide 17 of 18</div>
<svg style="left:68px;top:630px" width="12" height="11" viewBox="0 0 12 11"><path d="M0.5 1.5c2-1 4-1 5 0v9c-1-1-3-1-5 0z M5.5 1.5c2-1 4-1 5.5 0" fill="none" stroke="#777" stroke-width="0.9"/><path d="M7 9l4-6" stroke="#777" stroke-width="0.9"/></svg>
<div class="t" style="left:89.5px;top:631px;font-size:8.6px;color:#444;letter-spacing:-0.35px">English (United States)</div>
<svg style="left:902px;top:630.5px" width="10" height="11" viewBox="0 0 10 11"><path d="M2 3l3-2.5L8 3z" fill="#666"/><path d="M0.5 5h9M0.5 7h9M0.5 9h9M0.5 10.6h9" stroke="#888" stroke-width="0.8"/></svg>
<div class="t" style="left:915px;top:631px;font-size:8.6px;color:#333;letter-spacing:-0.2px">Notes</div>
<div class="a" style="left:950px;top:627.5px;width:26px;height:16.5px;background:#c9c9c9"></div>
<svg style="left:956.5px;top:630px" width="13" height="11" viewBox="0 0 13 11"><rect x="0.5" y="0.5" width="12" height="10" fill="none" stroke="#666" stroke-width="0.9"/><rect x="2.5" y="2.5" width="8" height="5" fill="none" stroke="#666" stroke-width="0.9"/><rect x="4.5" y="3.5" width="4" height="2.5" fill="#666"/></svg>
<svg style="left:983px;top:630.5px" width="11" height="10" viewBox="0 0 11 10"><rect x="0.5" y="0.5" width="4" height="3.5" fill="none" stroke="#777" stroke-width="0.9"/><rect x="6.5" y="0.5" width="4" height="3.5" fill="none" stroke="#777" stroke-width="0.9"/><rect x="0.5" y="6" width="4" height="3.5" fill="none" stroke="#777" stroke-width="0.9"/><rect x="6.5" y="6" width="4" height="3.5" fill="none" stroke="#777" stroke-width="0.9"/></svg>
<svg style="left:1009px;top:630px" width="12" height="11" viewBox="0 0 12 11"><path d="M0.5 1.5h5v8.5h-5zM6.5 1.5h5v8.5h-5z" fill="none" stroke="#777" stroke-width="0.9"/><path d="M2 3.5h2.5M2 5.5h2.5M7.5 3.5h2.5M7.5 5.5h2.5" stroke="#999" stroke-width="0.7"/></svg>
<svg style="left:1036px;top:630px" width="11" height="11" viewBox="0 0 11 11"><path d="M0 0.5h11M1.5 0.5v5h8v-5M5.5 5.5v3M3 10.5l2.5-2 2.5 2" fill="none" stroke="#777" stroke-width="0.9"/></svg>
<div class="a" style="left:1058px;top:635px;width:6px;height:1.3px;background:#555"></div>
<div class="a" style="left:1067px;top:635.5px;width:77.5px;height:1px;background:#c3c3c3"></div>
<div class="a" style="left:1105px;top:633px;width:1px;height:5px;background:#aaa"></div>
<div class="a" style="left:1095.5px;top:631px;width:3px;height:9px;background:#666"></div>
<svg style="left:1147px;top:632px" width="7" height="7" viewBox="0 0 7 7"><path d="M3.5 0v7M0 3.5h7" stroke="#555" stroke-width="1.2"/></svg>
<div class="t" style="left:1160px;top:631px;font-size:8.6px;color:#333;letter-spacing:-0.4px">79%</div>
<svg style="left:1186.5px;top:630px" width="10" height="10" viewBox="0 0 10 10"><path d="M0.5 3V0.5H3M7 0.5h2.5V3M9.5 7v2.5H7M3 9.5H0.5V7" fill="none" stroke="#666" stroke-width="0.9"/><path d="M0.5 4.5h9M4.5 0.5v9" stroke="#999" stroke-width="0.5"/></svg>
<svg style="left:162px;top:352px" width="13" height="18" viewBox="0 0 13 18"><path d="M1.4 1.7v12.7l3-2.9 2.2 5 2.3-1-2.1-4.8h4.3z" fill="#fff" stroke="#333" stroke-width="0.9" stroke-linejoin="round"/></svg>
<!-- /PANE -->
<!-- SLIDE -->
<div class="a" style="left:292px;top:153px;width:786px;height:443px;background:#dcdcdc;filter:blur(1px)"></div><svg style="left:290px;top:150px" width="788" height="446" viewBox="290 150 788 446">
<defs>
<linearGradient id="bg" x1="0" y1="0" x2="0" y2="1"><stop offset="0" stop-color="#ffffff"/><stop offset="0.1" stop-color="#fdfdfd"/><stop offset="0.55" stop-color="#f1f1f1"/><stop offset="1" stop-color="#eeeeee"/></linearGradient>
<radialGradient id="panel" cx="0.5" cy="0.5" r="0.62"><stop offset="0" stop-color="#f6f6f6"/><stop offset="0.45" stop-color="#dedede"/><stop offset="1" stop-color="#c4c4c4"/></radialGradient>
<linearGradient id="rib" x1="0" y1="0" x2="1" y2="1"><stop offset="0" stop-color="#d80000"/><stop offset="0.45" stop-color="#ff0a0a"/><stop offset="1" stop-color="#c00000"/></linearGradient>
<linearGradient id="num" x1="0" y1="1" x2="1" y2="0"><stop offset="0" stop-color="#004a8c"/><stop offset="1" stop-color="#0a82d0"/></linearGradient>
<filter id="blur2" x="-50%" y="-50%" width="200%" height="200%"><feGaussianBlur stdDeviation="2"/></filter>
<filter id="blur3" x="-50%" y="-50%" width="200%" height="200%"><feGaussianBlur stdDeviation="3"/></filter>
<filter id="blur1" x="-50%" y="-50%" width="200%" height="200%"><feGaussianBlur stdDeviation="1.2"/></filter>
<filter id="blur4" x="-50%" y="-100%" width="200%" height="300%"><feGaussianBlur stdDeviation="5 1.5"/></filter>
<filter id="tsh" x="-20%" y="-50%" width="140%" height="200%" filterUnits="objectBoundingBox"><feDropShadow dx="0.6" dy="0.8" stdDeviation="0.6" flood-color="#000" flood-opacity="0.8"/></filter>
<radialGradient id="glow" cx="0.5" cy="0.5" r="0.5"><stop offset="0" stop-color="#fff" stop-opacity="0.85"/><stop offset="1" stop-color="#fff" stop-opacity="0"/></radialGradient>
<radialGradient id="shd" cx="0.5" cy="0.5" r="0.5"><stop offset="0" stop-color="#000" stop-opacity="0.6"/><stop offset="0.5" stop-color="#000" stop-opacity="0.2"/><stop offset="1" stop-color="#000" stop-opacity="0"/></radialGradient>

<linearGradient id="tri_g" x1="0" y1="0" x2="0" y2="1"><stop offset="0" stop-color="#0e4a04"/><stop offset="0.15" stop-color="#2a7a10"/><stop offset="0.4" stop-color="#4aa818"/><stop offset="0.7" stop-color="#6ed428"/><stop offset="1" stop-color="#2c8a0c"/></linearGradient>
<linearGradient id="flap_g" x1="0" y1="0" x2="0" y2="1"><stop offset="0" stop-color="#2a7a10"/><stop offset="1" stop-color="#0e4a04"/></linearGradient>
<linearGradient id="tri_b" x1="0" y1="0" x2="0" y2="1"><stop offset="0" stop-color="#06285e"/><stop offset="0.15" stop-color="#0c3c8a"/><stop offset="0.4" stop-color="#0a6cc0"/><stop offset="0.7" stop-color="#14a4ec"/><stop offset="1" stop-color="#083a8a"/></linearGradient>
<linearGradient id="flap_b" x1="0" y1="0" x2="0" y2="1"><stop offset="0" stop-color="#0c3c8a"/><stop offset="1" stop-color="#06285e"/></linearGradient>
<linearGradient id="tri_o" x1="0" y1="0" x2="0" y2="1"><stop offset="0" stop-color="#6a2200"/><stop offset="0.15" stop-color="#a83a04"/><stop offset="0.4" stop-color="#e05a08"/><stop offset="0.7" stop-color="#ff6c10"/><stop offset="1" stop-color="#9a3600"/></linearGradient>
<linearGradient id="flap_o" x1="0" y1="0" x2="0" y2="1"><stop offset="0" stop-color="#a83a04"/><stop offset="1" stop-color="#6a2200"/></linearGradient>
<linearGradient id="arr1" gradientUnits="userSpaceOnUse" x1="520" y1="472" x2="541" y2="434"><stop offset="0" stop-color="#b8b8b8" stop-opacity="0"/><stop offset="1" stop-color="#9a9a9a"/></linearGradient>
<filter id="tsh2" x="-30%" y="-60%" width="160%" height="220%"><feDropShadow dx="0" dy="0.5" stdDeviation="0.5" flood-color="#600" flood-opacity="0.6"/></filter></defs>
<g id="sc">
<rect x="291.5" y="152.5" width="784" height="441.5" fill="url(#bg)"/>
<text x="340.3" y="203.3" font-family="Liberation Sans" font-size="26" letter-spacing="0.28" fill="#111">Animated Product Lifecycle</text>
</g>
<rect x="772.5" y="175.5" width="265" height="35.5" fill="none" stroke="#a8a8a8" stroke-width="0.8" stroke-dasharray="1.6 1.2"/>
<text x="826.7" y="198.5" font-family="Liberation Sans" font-size="14.6" fill="#7f7f7f">Breadcrumb 1 &gt; Breadcrumb 2</text>
<g id="sc2">
<ellipse cx="491.0" cy="564.4" rx="64" ry="3.4" fill="url(#shd)" filter="url(#blur4)"/>
<linearGradient id="fl_g" gradientUnits="userSpaceOnUse" x1="429.0" y1="250" x2="443.0" y2="247"><stop offset="0" stop-color="#4aa818"/><stop offset="1" stop-color="#0e4a04"/></linearGradient>
<linearGradient id="fr_g" gradientUnits="userSpaceOnUse" x1="541.0" y1="242" x2="555.0" y2="244"><stop offset="0" stop-color="#0e4a04"/><stop offset="0.4" stop-color="#0e4a04"/><stop offset="1" stop-color="#4aa818"/></linearGradient>
<polygon points="435.4,236.0 440.0,236.0 456.0,258.0 428.5,258.0" fill="url(#fl_g)"/>
<polygon points="546.0,236.0 550.7,236.0 555.0,248.0 537.0,248.0" fill="url(#fr_g)"/>
<polygon points="410.0,257.5 572.0,246.0 576.5,544.0 415.0,537.0" fill="url(#panel)"/>
<polygon points="445.0,250.0 549.0,244.0 494.0,309.0" fill="#000" opacity="0.35" filter="url(#blur3)"/>
<polygon points="438.2,236.0 547.9,236.0 492.7,305.6" fill="url(#tri_g)"/>
<polyline points="452.0,252.0 492.7,301.5 535.0,252.0" fill="none" stroke="#90ec50" stroke-width="1.3" opacity="0.9"/>
<polyline points="440.0,238.0 492.7,305.0" fill="none" stroke="#0e4a04" stroke-width="1.2" opacity="0.8"/>
<ellipse cx="492.7" cy="241.8" rx="40" ry="2" fill="url(#glow)"/>
<ellipse cx="492.7" cy="274.8" rx="18" ry="1.6" fill="url(#glow)"/>
<polygon points="485.7,283.5 499.5,283.5 492.6,292.5" fill="#c8f0b0" opacity="0.85"/>
<text x="494.4" y="263.2" font-family="Liberation Sans" font-weight="bold" font-size="14.6" fill="#fff" text-anchor="middle" filter="url(#tsh)">EDIT TEXT</text>
<text x="490.5" y="333.1" font-family="Liberation Sans" font-size="14.5" fill="#5a5a5a" text-anchor="middle">This is a sample</text>
<text x="490.5" y="350.7" font-family="Liberation Sans" font-size="14.5" fill="#5a5a5a" text-anchor="middle">text. Insert your</text>
<text x="490.5" y="368.3" font-family="Liberation Sans" font-size="14.5" fill="#5a5a5a" text-anchor="middle">desired text here.</text>
<ellipse cx="676.0" cy="564.4" rx="64" ry="3.4" fill="url(#shd)" filter="url(#blur4)"/>
<linearGradient id="fl_b" gradientUnits="userSpaceOnUse" x1="614.0" y1="250" x2="628.0" y2="247"><stop offset="0" stop-color="#0a6cc0"/><stop offset="1" stop-color="#06285e"/></linearGradient>
<linearGradient id="fr_b" gradientUnits="userSpaceOnUse" x1="726.0" y1="242" x2="740.0" y2="244"><stop offset="0" stop-color="#06285e"/><stop offset="0.4" stop-color="#06285e"/><stop offset="1" stop-color="#0a6cc0"/></linearGradient>
<polygon points="620.4,236.0 625.0,236.0 641.0,258.0 613.5,258.0" fill="url(#fl_b)"/>
<polygon points="731.0,236.0 735.7,236.0 740.0,248.0 722.0,248.0" fill="url(#fr_b)"/>
<polygon points="595.0,257.5 757.0,246.0 761.5,544.0 600.0,537.0" fill="url(#panel)"/>
<polygon points="630.0,250.0 734.0,244.0 679.0,309.0" fill="#000" opacity="0.35" filter="url(#blur3)"/>
<polygon points="623.2,236.0 732.9,236.0 677.7,305.6" fill="url(#tri_b)"/>
<polyline points="637.0,252.0 677.7,301.5 720.0,252.0" fill="none" stroke="#5ccaf6" stroke-width="1.3" opacity="0.9"/>
<polyline points="625.0,238.0 677.7,305.0" fill="none" stroke="#06285e" stroke-width="1.2" opacity="0.8"/>
<ellipse cx="677.7" cy="241.8" rx="40" ry="2" fill="url(#glow)"/>
<ellipse cx="677.7" cy="274.8" rx="18" ry="1.6" fill="url(#glow)"/>
<polygon points="670.7,283.5 684.5,283.5 677.6,292.5" fill="#b8e4fa" opacity="0.85"/>
<text x="679.4" y="263.2" font-family="Liberation Sans" font-weight="bold" font-size="14.6" fill="#fff" text-anchor="middle" filter="url(#tsh)">EDIT TEXT</text>
<text x="675.5" y="333.1" font-family="Liberation Sans" font-size="14.5" fill="#5a5a5a" text-anchor="middle">This is a sample</text>
<text x="675.5" y="350.7" font-family="Liberation Sans" font-size="14.5" fill="#5a5a5a" text-anchor="middle">text. Insert your</text>
<text x="675.5" y="368.3" font-family="Liberation Sans" font-size="14.5" fill="#5a5a5a" text-anchor="middle">desired text here.</text>
<ellipse cx="861.5" cy="564.4" rx="64" ry="3.4" fill="url(#shd)" filter="url(#blur4)"/>
<linearGradient id="fl_o" gradientUnits="userSpaceOnUse" x1="799.5" y1="250" x2="813.5" y2="247"><stop offset="0" stop-color="#e05a08"/><stop offset="1" stop-color="#6a2200"/></linearGradient>
<linearGradient id="fr_o" gradientUnits="userSpaceOnUse" x1="911.5" y1="242" x2="925.5" y2="244"><stop offset="0" stop-color="#6a2200"/><stop offset="0.4" stop-color="#6a2200"/><stop offset="1" stop-color="#e05a08"/></linearGradient>
<polygon points="805.9,236.0 810.5,236.0 826.5,258.0 799.0,258.0" fill="url(#fl_o)"/>
<polygon points="916.5,236.0 921.2,236.0 925.5,248.0 907.5,248.0" fill="url(#fr_o)"/>
<polygon points="780.5,257.5 942.5,246.0 947.0,544.0 785.5,537.0" fill="url(#panel)"/>
<polygon points="815.5,250.0 919.5,244.0 864.5,309.0" fill="#000" opacity="0.35" filter="url(#blur3)"/>
<polygon points="808.7,236.0 918.4,236.0 863.2,305.6" fill="url(#tri_o)"/>
<polyline points="822.5,252.0 863.2,301.5 905.5,252.0" fill="none" stroke="#ffa060" stroke-width="1.3" opacity="0.9"/>
<polyline points="810.5,238.0 863.2,305.0" fill="none" stroke="#6a2200" stroke-width="1.2" opacity="0.8"/>
<ellipse cx="863.2" cy="241.8" rx="40" ry="2" fill="url(#glow)"/>
<ellipse cx="863.2" cy="274.8" rx="18" ry="1.6" fill="url(#glow)"/>
<polygon points="856.2,283.5 870.0,283.5 863.1,292.5" fill="#fcd0b0" opacity="0.85"/>
<text x="864.9" y="263.2" font-family="Liberation Sans" font-weight="bold" font-size="14.6" fill="#fff" text-anchor="middle" filter="url(#tsh)">EDIT TEXT</text>
<text x="861.0" y="333.1" font-family="Liberation Sans" font-size="14.5" fill="#5a5a5a" text-anchor="middle">This is a sample</text>
<text x="861.0" y="350.7" font-family="Liberation Sans" font-size="14.5" fill="#5a5a5a" text-anchor="middle">text. Insert your</text>
<text x="861.0" y="368.3" font-family="Liberation Sans" font-size="14.5" fill="#5a5a5a" text-anchor="middle">desired text here.</text>
<path d="M516,474 C527,464 533,453 534.5,444.5 L529.5,444.5 L541.5,433.5 L552,444.5 L546.5,444.5 C544,457 535,470 521,479 Z" fill="url(#arr1)"/>
<linearGradient id="ca0" gradientUnits="userSpaceOnUse" x1="655.1" y1="426.0" x2="705.9" y2="428.7"><stop offset="0" stop-color="#c8c8c8" stop-opacity="0"/><stop offset="1" stop-color="#a4a4a4"/></linearGradient>
<path d="M652.2,421.3 A51.0,51.0 0 0 1 702.4,420.0 L704.8,415.6 L705.9,428.7 L694.9,434.1 L697.3,429.7 A40.0,40.0 0 0 0 657.9,430.7 Z" fill="url(#ca0)"/>
<linearGradient id="ca1" gradientUnits="userSpaceOnUse" x1="717.5" y1="441.6" x2="714.8" y2="492.4"><stop offset="0" stop-color="#c8c8c8" stop-opacity="0"/><stop offset="1" stop-color="#a4a4a4"/></linearGradient>
<path d="M722.2,438.7 A51.0,51.0 0 0 1 723.5,488.9 L727.9,491.3 L714.8,492.4 L709.4,481.4 L713.8,483.8 A40.0,40.0 0 0 0 712.8,444.4 Z" fill="url(#ca1)"/>
<linearGradient id="ca2" gradientUnits="userSpaceOnUse" x1="701.9" y1="504.0" x2="651.1" y2="501.3"><stop offset="0" stop-color="#c8c8c8" stop-opacity="0"/><stop offset="1" stop-color="#a4a4a4"/></linearGradient>
<path d="M704.8,508.7 A51.0,51.0 0 0 1 654.6,510.0 L652.2,514.4 L651.1,501.3 L662.1,495.9 L659.7,500.3 A40.0,40.0 0 0 0 699.1,499.3 Z" fill="url(#ca2)"/>
<linearGradient id="ca3" gradientUnits="userSpaceOnUse" x1="639.5" y1="488.4" x2="642.2" y2="437.6"><stop offset="0" stop-color="#c8c8c8" stop-opacity="0"/><stop offset="1" stop-color="#a4a4a4"/></linearGradient>
<path d="M634.8,491.3 A51.0,51.0 0 0 1 633.5,441.1 L629.1,438.7 L642.2,437.6 L647.6,448.6 L643.2,446.2 A40.0,40.0 0 0 0 644.2,485.6 Z" fill="url(#ca3)"/>
<path d="M427.0,529.8 C429.2,529.4 434.5,528.8 440.0,527.7 C445.5,526.6 453.3,525.0 460.0,523.0 C466.7,521.0 473.3,519.0 480.0,516.0 C486.7,513.0 493.3,509.3 500.0,505.2 C506.7,501.1 513.3,496.4 520.0,491.2 C526.7,486.0 533.8,479.5 540.0,474.1 C546.2,468.7 551.3,464.2 557.0,458.8 C562.7,453.4 568.3,447.1 574.0,441.7 C579.7,436.3 585.3,431.0 591.0,426.3 C596.7,421.6 602.3,417.6 608.0,413.5 C613.7,409.4 619.3,405.2 625.0,401.6 C630.7,398.1 636.3,394.8 642.0,392.2 C647.7,389.6 653.3,387.8 659.0,386.2 C664.7,384.6 670.3,383.1 676.0,382.6 C681.7,382.1 687.3,382.6 693.0,383.3 C698.7,384.1 704.3,385.3 710.0,387.1 C715.7,388.9 721.3,391.3 727.0,393.9 C732.7,396.4 738.3,399.3 744.0,402.4 C749.7,405.5 755.3,408.7 761.0,412.7 C766.7,416.7 772.3,421.3 778.0,426.3 C783.7,431.3 788.5,435.9 795.0,442.5 C801.5,449.1 810.5,459.2 817.0,465.9 C823.5,472.6 828.3,477.8 834.0,482.9 C839.7,488.0 845.3,492.5 851.0,496.6 C856.7,500.7 862.3,504.3 868.0,507.7 C873.7,511.1 879.3,514.5 885.0,517.1 C890.7,519.8 896.3,521.8 902.0,523.6 C907.7,525.4 913.8,526.7 919.0,527.7 C924.2,528.7 931.1,529.2 933.5,529.5" fill="none" stroke="#000" stroke-opacity="0.35" stroke-width="4" transform="translate(0,3)" filter="url(#blur2)"/>
<path d="M427.0,529.8 C429.2,529.4 434.5,528.8 440.0,527.7 C445.5,526.6 453.3,525.0 460.0,523.0 C466.7,521.0 473.3,519.0 480.0,516.0 C486.7,513.0 493.3,509.3 500.0,505.2 C506.7,501.1 513.3,496.4 520.0,491.2 C526.7,486.0 533.8,479.5 540.0,474.1 C546.2,468.7 551.3,464.2 557.0,458.8 C562.7,453.4 568.3,447.1 574.0,441.7 C579.7,436.3 585.3,431.0 591.0,426.3 C596.7,421.6 602.3,417.6 608.0,413.5 C613.7,409.4 619.3,405.2 625.0,401.6 C630.7,398.1 636.3,394.8 642.0,392.2 C647.7,389.6 653.3,387.8 659.0,386.2 C664.7,384.6 670.3,383.1 676.0,382.6 C681.7,382.1 687.3,382.6 693.0,383.3 C698.7,384.1 704.3,385.3 710.0,387.1 C715.7,388.9 721.3,391.3 727.0,393.9 C732.7,396.4 738.3,399.3 744.0,402.4 C749.7,405.5 755.3,408.7 761.0,412.7 C766.7,416.7 772.3,421.3 778.0,426.3 C783.7,431.3 788.5,435.9 795.0,442.5 C801.5,449.1 810.5,459.2 817.0,465.9 C823.5,472.6 828.3,477.8 834.0,482.9 C839.7,488.0 845.3,492.5 851.0,496.6 C856.7,500.7 862.3,504.3 868.0,507.7 C873.7,511.1 879.3,514.5 885.0,517.1 C890.7,519.8 896.3,521.8 902.0,523.6 C907.7,525.4 913.8,526.7 919.0,527.7 C924.2,528.7 931.1,529.2 933.5,529.5" fill="none" stroke="#3a3a3a" stroke-width="2.4" stroke-linecap="round"/>
<defs><path id="crv" d="M427.0,529.8 C429.2,529.4 434.5,528.8 440.0,527.7 C445.5,526.6 453.3,525.0 460.0,523.0 C466.7,521.0 473.3,519.0 480.0,516.0 C486.7,513.0 493.3,509.3 500.0,505.2 C506.7,501.1 513.3,496.4 520.0,491.2 C526.7,486.0 533.8,479.5 540.0,474.1 C546.2,468.7 551.3,464.2 557.0,458.8 C562.7,453.4 568.3,447.1 574.0,441.7 C579.7,436.3 585.3,431.0 591.0,426.3 C596.7,421.6 602.3,417.6 608.0,413.5 C613.7,409.4 619.3,405.2 625.0,401.6 C630.7,398.1 636.3,394.8 642.0,392.2 C647.7,389.6 653.3,387.8 659.0,386.2 C664.7,384.6 670.3,383.1 676.0,382.6 C681.7,382.1 687.3,382.6 693.0,383.3 C698.7,384.1 704.3,385.3 710.0,387.1 C715.7,388.9 721.3,391.3 727.0,393.9 C732.7,396.4 738.3,399.3 744.0,402.4 C749.7,405.5 755.3,408.7 761.0,412.7 C766.7,416.7 772.3,421.3 778.0,426.3 C783.7,431.3 788.5,435.9 795.0,442.5 C801.5,449.1 810.5,459.2 817.0,465.9 C823.5,472.6 828.3,477.8 834.0,482.9 C839.7,488.0 845.3,492.5 851.0,496.6 C856.7,500.7 862.3,504.3 868.0,507.7 C873.7,511.1 879.3,514.5 885.0,517.1 C890.7,519.8 896.3,521.8 902.0,523.6 C907.7,525.4 913.8,526.7 919.0,527.7 C924.2,528.7 931.1,529.2 933.5,529.5"/></defs>
<g transform="translate(470.8,487.0) rotate(-19.5)"><text x="0" y="-10.6" font-family="Liberation Sans" font-weight="bold" font-size="13.2" fill="#2a9c14" stroke="#2a9c14" stroke-width="0.25" text-anchor="middle">Insert your</text><text x="0" y="4.6" font-family="Liberation Sans" font-weight="bold" font-size="13.2" fill="#2a9c14" stroke="#2a9c14" stroke-width="0.25" text-anchor="middle">desired text</text><text x="0" y="19.8" font-family="Liberation Sans" font-weight="bold" font-size="13.2" fill="#2a9c14" stroke="#2a9c14" stroke-width="0.25" text-anchor="middle">here.</text></g>
<g transform="translate(679.7,467.5) rotate(0.0)"><text x="0" y="-10.6" font-family="Liberation Sans" font-weight="bold" font-size="13.0" fill="#166bc2" stroke="#166bc2" stroke-width="0.25" text-anchor="middle">Insert your</text><text x="0" y="4.6" font-family="Liberation Sans" font-weight="bold" font-size="13.0" fill="#166bc2" stroke="#166bc2" stroke-width="0.25" text-anchor="middle">desired text</text><text x="0" y="19.8" font-family="Liberation Sans" font-weight="bold" font-size="13.0" fill="#166bc2" stroke="#166bc2" stroke-width="0.25" text-anchor="middle">here.</text></g>
<g transform="translate(861.0,466.0) rotate(39.0)"><text x="0" y="-10.6" font-family="Liberation Sans" font-weight="bold" font-size="13.0" fill="#2e2e2e" stroke="#2e2e2e" stroke-width="0.25" text-anchor="middle">Insert your</text><text x="0" y="4.6" font-family="Liberation Sans" font-weight="bold" font-size="13.0" fill="#2e2e2e" stroke="#2e2e2e" stroke-width="0.25" text-anchor="middle">desired text</text><text x="0" y="19.8" font-family="Liberation Sans" font-weight="bold" font-size="13.0" fill="#2e2e2e" stroke="#2e2e2e" stroke-width="0.25" text-anchor="middle">here.</text></g>
<text x="339.4" y="578" font-family="Liberation Sans" font-size="12" fill="#808080">SlideModel.com</text>
<rect x="1026.5" y="561" width="49" height="24" fill="url(#num)" stroke="#fff" stroke-width="0.8"/>
<text x="1051.2" y="577.6" font-family="Liberation Sans" font-size="12" fill="#fff" text-anchor="middle">17</text>
<polygon points="953,152.5 1003,152.5 1075.5,223 1075.5,273" fill="url(#rib)"/>
<polyline points="957.5,152.5 1075.5,268.5" fill="none" stroke="#ffe000" stroke-width="1.1" stroke-dasharray="3 2.2"/>
<polyline points="998.8,152.5 1075.5,227.8" fill="none" stroke="#ffe000" stroke-width="1.1" stroke-dasharray="3 2.2"/>
<text x="0" y="0" font-family="Liberation Sans" font-weight="bold" font-size="13.8" letter-spacing="-0.4" fill="#fff" text-anchor="middle" transform="translate(1029.5,207.5) rotate(44.5)" filter="url(#tsh2)">FREE BUNDLE</text>
<rect x="291.5" y="152.5" width="784" height="441.5" fill="none" stroke="#d2d2d2" stroke-width="1"/>
</g>
</svg>
<!-- /SLIDE -->
<!-- THUMBS -->
<div class="a" style="left:0;top:120px;width:144px;height:506px;overflow:hidden">
<svg style="left:0;top:-120px" width="144" height="646" viewBox="0 0 144 646">
<defs>
<linearGradient id="tbg" x1="0" y1="0" x2="0" y2="1"><stop offset="0" stop-color="#fff"/><stop offset="1" stop-color="#f0f0f0"/></linearGradient>
<linearGradient id="t18" x1="0" y1="0" x2="1" y2="0"><stop offset="0" stop-color="#0b5f8f"/><stop offset="0.5" stop-color="#1590c8"/><stop offset="1" stop-color="#0b5f8f"/></linearGradient>
<radialGradient id="fun" cx="0.5" cy="0.3" r="0.7"><stop offset="0" stop-color="#bfe4f8"/><stop offset="1" stop-color="#3e9ad6"/></radialGradient>
</defs>
<text x="4.5" y="183.0" font-family="Liberation Sans" font-size="11.5" fill="#444">12</text>
<text x="4.5" y="256.0" font-family="Liberation Sans" font-size="11.5" fill="#444">13</text>
<text x="4.5" y="329.0" font-family="Liberation Sans" font-size="11.5" fill="#444">14</text>
<text x="4.5" y="402.0" font-family="Liberation Sans" font-size="11.5" fill="#444">15</text>
<text x="4.5" y="475.0" font-family="Liberation Sans" font-size="11.5" fill="#444">16</text>
<text x="4.5" y="622.6" font-family="Liberation Sans" font-size="11.5" fill="#444">18</text>
<text x="4" y="548.8" font-family="Liberation Sans" font-size="11.5" fill="#c8462a">17</text>
<path d="M12.2 552.5l1.3 2.6 2.9.4-2.1 2 .5 2.9-2.6-1.4-2.6 1.4.5-2.9-2.1-2 2.9-.4z" fill="#555"/><path d="M8 554l2.5 0.5" stroke="#777" stroke-width="0.6"/>
<rect x="27.5" y="101.0" width="102" height="58" fill="url(#tbg)" stroke="#cdcdcd" stroke-width="0.8"/><rect x="122.5" y="154.0" width="6" height="2.8" fill="#0a6ab0"/><rect x="34" y="151.8" width="9" height="0.8" fill="#bbb"/>
<path d="M73.5 152.6 C75 145 76.5 139 76 134 C73 131 70 129 69 126.5 L70.5 126 C72 128 75 130 77.5 131.5 C79 128 81 125 82 123 L83.3 123.5 C82 128 81 133 81.5 138 C82 144 83 149 84 152.6 Z" fill="#463c2c"/>
<ellipse cx="62" cy="128" rx="6.0" ry="3.0" fill="#1e9e3a" transform="rotate(10 62 128)"/>
<ellipse cx="65" cy="136" rx="7.0" ry="3.0" fill="#1e9e3a" transform="rotate(-10 65 136)"/>
<ellipse cx="92" cy="131" rx="8.0" ry="3.6" fill="#1e9e3a" transform="rotate(-5 92 131)"/>
<ellipse cx="91" cy="122" rx="5.0" ry="2.5" fill="#1e9e3a" transform="rotate(-25 91 122)"/>
<ellipse cx="73" cy="121" rx="4.0" ry="2.0" fill="#1e9e3a" transform="rotate(15 73 121)"/>
<ellipse cx="87" cy="137" rx="3.8" ry="2.2" fill="#1e9e3a" transform="rotate(20 87 137)"/>
<ellipse cx="62" cy="121" rx="3.0" ry="1.5" fill="#1e9e3a" transform="rotate(15 62 121)"/>
<rect x="42.0" y="143.0" width="14.0" height="0.7" fill="#aaa"/><rect x="42.0" y="144.8" width="14.0" height="0.7" fill="#aaa"/><rect x="43.0" y="146.6" width="12.0" height="0.7" fill="#aaa"/>
<rect x="93.0" y="143.0" width="14.0" height="0.7" fill="#aaa"/><rect x="93.0" y="144.8" width="14.0" height="0.7" fill="#aaa"/><rect x="94.0" y="146.6" width="12.0" height="0.7" fill="#aaa"/>
<rect x="27.5" y="174.4" width="102" height="58" fill="url(#tbg)" stroke="#cdcdcd" stroke-width="0.8"/><text x="34" y="182.4" font-family="Liberation Sans" font-size="3.6" fill="#333">Funnel Diagram</text><polygon points="112.5,174.4 119.0,174.4 129.5,184.9 129.5,191.4" fill="#e00"/><rect x="122.5" y="227.4" width="6" height="2.8" fill="#0a6ab0"/><rect x="34" y="225.2" width="9" height="0.8" fill="#bbb"/>
<path d="M59.3 192.7 Q79.5 199 99.7 192.7 L84.6 224 Q79.5 227 74.5 224 Z" fill="#3c95d2"/>
<path d="M62.5 197.5 Q79.5 202.0 96.5 197.5" fill="none" stroke="#bfe6fa" stroke-width="0.9"/>
<path d="M65.9 203.5 Q79.5 208.0 93.1 203.5" fill="none" stroke="#bfe6fa" stroke-width="0.9"/>
<path d="M68.8 209.0 Q79.5 213.5 90.2 209.0" fill="none" stroke="#bfe6fa" stroke-width="0.9"/>
<path d="M71.3 214.5 Q79.5 219.0 87.7 214.5" fill="none" stroke="#bfe6fa" stroke-width="0.9"/>
<ellipse cx="79.5" cy="192.7" rx="20.2" ry="3.5" fill="#a8dcf6"/>
<ellipse cx="79.5" cy="192.2" rx="16" ry="2.4" fill="#d6f0fc"/>
<circle cx="79.5" cy="199.8" r="1.8" fill="#1877c2"/>
<circle cx="79.5" cy="206.0" r="1.8" fill="#1877c2"/>
<circle cx="79.5" cy="211.5" r="1.8" fill="#1877c2"/>
<circle cx="79.5" cy="216.8" r="1.8" fill="#1877c2"/>
<circle cx="79.5" cy="222.5" r="1.8" fill="#1877c2"/>
<ellipse cx="79.5" cy="227.5" rx="4" ry="0.8" fill="#999" opacity="0.6"/>
<rect x="42.0" y="195.5" width="16.0" height="0.7" fill="#aaa"/><rect x="43.0" y="197.3" width="14.0" height="0.7" fill="#aaa"/>
<rect x="40.0" y="207.0" width="17.0" height="0.7" fill="#aaa"/><rect x="41.0" y="208.8" width="15.0" height="0.7" fill="#aaa"/>
<rect x="103.0" y="194.0" width="20.0" height="0.7" fill="#aaa"/><rect x="104.0" y="195.8" width="18.0" height="0.7" fill="#aaa"/>
<rect x="99.0" y="203.5" width="20.0" height="0.7" fill="#aaa"/><rect x="100.0" y="205.3" width="18.0" height="0.7" fill="#aaa"/>
<rect x="97.0" y="215.0" width="20.0" height="0.7" fill="#aaa"/><rect x="98.0" y="216.8" width="18.0" height="0.7" fill="#aaa"/>
<rect x="61" y="197" width="3" height="0.8" fill="#666"/><rect x="60" y="208.5" width="3" height="0.8" fill="#666"/><rect x="91" y="203.5" width="6" height="0.7" fill="#666"/><rect x="90" y="215" width="6" height="0.7" fill="#666"/>
<rect x="27.5" y="247.4" width="102" height="58" fill="url(#tbg)" stroke="#cdcdcd" stroke-width="0.8"/><text x="34" y="255.4" font-family="Liberation Sans" font-size="3.6" fill="#333">Data-Driven Pie Chart</text><polygon points="112.5,247.4 119.0,247.4 129.5,257.9 129.5,264.4" fill="#e00"/><rect x="122.5" y="300.4" width="6" height="2.8" fill="#0a6ab0"/><rect x="34" y="298.2" width="9" height="0.8" fill="#bbb"/>
<ellipse cx="79" cy="268" rx="30" ry="10" fill="#e8e8e8" opacity="0.6"/>
<ellipse cx="59" cy="281" rx="17" ry="12.5" fill="#5e8a14"/>
<path d="M59 278 L59 265.5 A17 12.5 0 0 1 76 278 Z" fill="#6d9e1e"/>
<path d="M59 278 L42 278 A17 12.5 0 0 1 59 265.5 Z" fill="#6d9e1e"/>
<path d="M59 278 L76 274 A17 12.5 0 0 1 66 290 Z" fill="#1f4e8c"/>
<path d="M59 278 L66 290 A17 12.5 0 0 1 55 290.5 Z" fill="#e81818"/>
<path d="M59 278 L55 290.5 A17 12.5 0 0 1 44 284 Z" fill="#f5c000"/>
<path d="M59 278 L44 284 A17 12.5 0 0 1 42 278 Z" fill="#6d9e1e"/>
<rect x="85.0" y="270.0" width="12.0" height="0.7" fill="#aaa"/>
<rect x="84.0" y="274.0" width="22.0" height="0.7" fill="#aaa"/><rect x="85.0" y="275.8" width="20.0" height="0.7" fill="#aaa"/>
<rect x="84.0" y="279.0" width="22.0" height="0.7" fill="#aaa"/><rect x="85.0" y="280.8" width="20.0" height="0.7" fill="#aaa"/>
<rect x="27.5" y="320.4" width="102" height="58" fill="url(#tbg)" stroke="#cdcdcd" stroke-width="0.8"/><text x="34" y="328.4" font-family="Liberation Sans" font-size="3.6" fill="#333">World Map for PowerPoint</text><polygon points="112.5,320.4 119.0,320.4 129.5,330.9 129.5,337.4" fill="#e00"/><rect x="122.5" y="373.4" width="6" height="2.8" fill="#0a6ab0"/><rect x="34" y="371.2" width="9" height="0.8" fill="#bbb"/>
<g fill="#7b7b7b"><polygon points="41.9,338.9 50.8,336.4 57.8,336.9 63.8,338.9 65.8,342.4 62.8,344.8 59.8,347.8 58.3,350.3 59.8,352.3 57.3,352.3 54.3,349.3 51.6,346.8 49.9,342.9 44.9,341.9 39.9,343.6"/><polygon points="63.3,335.7 68.7,332.9 73.7,334.4 70.2,339.9 66.7,340.7"/><polygon points="59.3,355.0 64.8,353.8 70.2,357.8 68.2,362.7 63.8,370.2 62.0,367.7 60.8,360.7"/><polygon points="76.7,341.1 80.7,337.9 89.6,337.4 99.6,335.9 109.5,337.1 116.5,338.4 112.5,341.9 107.5,347.0 104.5,349.8 100.5,352.3 96.6,351.3 93.1,348.3 88.6,347.0 84.6,346.0 80.7,347.0 76.7,345.0"/><polygon points="74.2,348.3 80.7,346.8 86.6,347.8 89.1,353.3 87.1,359.7 83.6,364.2 81.7,362.2 79.7,355.8 74.7,352.8"/><polygon points="102.5,362.2 107.5,359.9 111.7,361.9 110.7,365.9 104.5,364.9"/><polygon points="99.1,353.3 104.5,355.0 108.0,358.3 103.5,357.3 99.6,355.8"/></g>
<rect x="75.0" y="368.0" width="7.0" height="0.7" fill="#aaa"/>
<rect x="27.5" y="393.4" width="102" height="58" fill="url(#tbg)" stroke="#cdcdcd" stroke-width="0.8"/><text x="34" y="401.4" font-family="Liberation Sans" font-size="3.6" fill="#333">Editable Map</text><polygon points="112.5,393.4 119.0,393.4 129.5,403.9 129.5,410.4" fill="#e00"/><rect x="122.5" y="446.4" width="6" height="2.8" fill="#0a6ab0"/><rect x="34" y="444.2" width="9" height="0.8" fill="#bbb"/>
<circle cx="59.3" cy="419.8" r="8" fill="#1f58a8"/><rect x="51.3" y="418.6" width="16" height="2.6" fill="#f2c200"/><rect x="57.9" y="411.8" width="2.6" height="16" fill="#f2c200"/>
<rect x="55.0" y="430.0" width="9.0" height="0.7" fill="#aaa"/>
<rect x="52.0" y="433.0" width="16.0" height="0.7" fill="#aaa"/><rect x="53.0" y="434.8" width="14.0" height="0.7" fill="#aaa"/>
<polygon points="99.7,404.1 104.8,407.2 106.8,413.7 102.8,415.3 99.2,420.3 97.9,424.3 100.3,430.4 102.0,436.7 97.9,441.7 91.9,445.4 87.4,440.7 88.8,433.6 91.7,425.6 93.9,418.3 96.9,410.2" fill="#3272c4"/>
<rect x="97.5" y="422.5" width="8" height="4" fill="#1a3e7a"/><rect x="97.5" y="423.9" width="8" height="1.2" fill="#f0c000"/><rect x="99.8" y="422.5" width="1.2" height="4" fill="#f0c000"/>
<circle cx="98.2" cy="414.2" r="1.7" fill="#e02020"/><circle cx="93.7" cy="426.4" r="1.7" fill="#e02020"/><circle cx="89.6" cy="439" r="2.1" fill="#e02020"/><circle cx="89.6" cy="439" r="0.8" fill="#fff"/>
<rect x="27.5" y="466.4" width="102" height="58" fill="url(#tbg)" stroke="#cdcdcd" stroke-width="0.8"/><text x="34" y="474.4" font-family="Liberation Sans" font-size="3.6" fill="#333">SWOT Analysis</text><polygon points="112.5,466.4 119.0,466.4 129.5,476.9 129.5,483.4" fill="#e00"/><rect x="122.5" y="519.4" width="6" height="2.8" fill="#0a6ab0"/><rect x="34" y="517.2" width="9" height="0.8" fill="#bbb"/>
<g font-family="Liberation Sans" font-weight="bold" font-size="10" fill="#b4b4b4"><text x="30" y="493">S</text><text x="116" y="493">W</text><text x="30" y="514">O</text><text x="118" y="514">T</text></g>
<rect x="43.6" y="479.6" width="34" height="19" rx="2" fill="#fff" stroke="#1d6fc0" stroke-width="1"/><rect x="43.6" y="479.6" width="34" height="5" rx="1.5" fill="#1d6fc0"/><rect x="55.6" y="481.6" width="10" height="1" fill="#fff" opacity="0.8"/>
<rect x="52.6" y="486.6" width="10.0" height="0.7" fill="#aaa"/><rect x="53.6" y="488.4" width="8.0" height="0.7" fill="#aaa"/>
<rect x="79.0" y="479.6" width="34" height="19" rx="2" fill="#fff" stroke="#d0580e" stroke-width="1"/><rect x="79.0" y="479.6" width="34" height="5" rx="1.5" fill="#d0580e"/><rect x="91.0" y="481.6" width="10" height="1" fill="#fff" opacity="0.8"/>
<rect x="88.0" y="486.6" width="10.0" height="0.7" fill="#aaa"/><rect x="89.0" y="488.4" width="8.0" height="0.7" fill="#aaa"/>
<rect x="43.6" y="500.3" width="34" height="19" rx="2" fill="#fff" stroke="#4a9a1e" stroke-width="1"/><rect x="43.6" y="500.3" width="34" height="5" rx="1.5" fill="#4a9a1e"/><rect x="55.6" y="502.3" width="10" height="1" fill="#fff" opacity="0.8"/>
<rect x="52.6" y="507.3" width="10.0" height="0.7" fill="#aaa"/><rect x="53.6" y="509.1" width="8.0" height="0.7" fill="#aaa"/>
<rect x="79.0" y="500.3" width="34" height="19" rx="2" fill="#fff" stroke="#b81c1c" stroke-width="1"/><rect x="79.0" y="500.3" width="34" height="5" rx="1.5" fill="#b81c1c"/><rect x="91.0" y="502.3" width="10" height="1" fill="#fff" opacity="0.8"/>
<rect x="88.0" y="507.3" width="10.0" height="0.7" fill="#aaa"/><rect x="89.0" y="509.1" width="8.0" height="0.7" fill="#aaa"/>
<circle cx="78.2" cy="498.7" r="7.5" fill="#1f5ea8" stroke="#444" stroke-width="0.8"/><circle cx="78.2" cy="497.5" r="5" fill="#4a96e0"/><rect x="75" y="496.5" width="6.5" height="1.2" fill="#fff" opacity="0.85"/>
<rect x="27.1" y="540" width="103" height="58.6" fill="none" stroke="#d24726" stroke-width="1.9"/>
<svg x="28" y="541" width="101.5" height="57" viewBox="291.5 152.5 784 441.5" preserveAspectRatio="none"><use href="#sc"/><use href="#sc2"/><use href="#crv" stroke="#333" stroke-width="8" fill="none"/></svg>
<rect x="28.5" y="614" width="100" height="20" fill="url(#t18)"/>
</svg></div>
<!-- /THUMBS -->
</body></html>
